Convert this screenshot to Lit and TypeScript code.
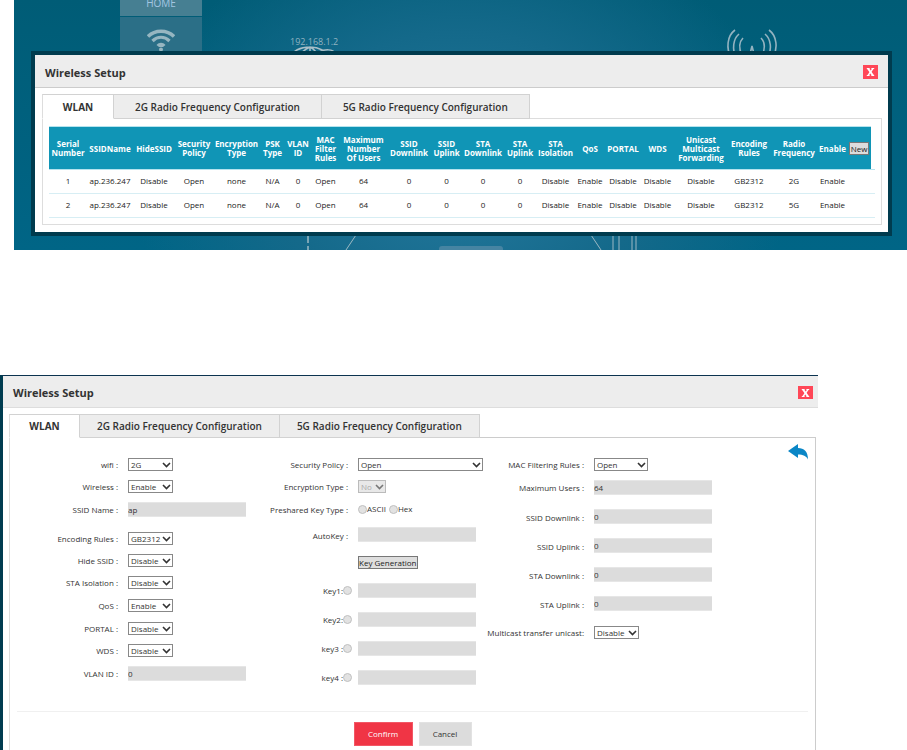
import { LitElement, html, css, svg, nothing } from "lit";
import { customElement, property } from "lit/decorators.js";
import { classMap } from "lit/directives/class-map.js";

type Column = { title: string; width: number };

const columns: Column[] = [
  { title: "Serial Number", width: 38 },
  { title: "SSIDName", width: 46 },
  { title: "HideSSID", width: 42 },
  { title: "Security Policy", width: 38 },
  { title: "Encryption Type", width: 47 },
  { title: "PSK Type", width: 25 },
  { title: "VLAN ID", width: 26 },
  { title: "MAC Filter Rules", width: 29 },
  { title: "Maximum\nNumber\nOf Users", width: 47 },
  { title: "SSID Downlink", width: 44 },
  { title: "SSID Uplink", width: 31 },
  { title: "STA Downlink", width: 42 },
  { title: "STA Uplink", width: 32 },
  { title: "STA Isolation", width: 39 },
  { title: "QoS", width: 30 },
  { title: "PORTAL", width: 36 },
  { title: "WDS", width: 33 },
  { title: "Unicast Multicast Forwarding", width: 54 },
  { title: "Encoding Rules", width: 42 },
  { title: "Radio Frequency", width: 48 },
  { title: "Enable", width: 29 },
];
const actionWidth = 24;
const spareWidth = 4;
const totalWidth = columns.reduce((sum, c) => sum + c.width, actionWidth + spareWidth);

const networks = [
  ["1", "ap.236.247", "Disable", "Open", "none", "N/A", "0", "Open", "64", "0", "0", "0", "0",
    "Disable", "Enable", "Disable", "Disable", "Disable", "GB2312", "2G", "Enable"],
  ["2", "ap.236.247", "Disable", "Open", "none", "N/A", "0", "Open", "64", "0", "0", "0", "0",
    "Disable", "Enable", "Disable", "Disable", "Disable", "GB2312", "5G", "Enable"],
];

/** Titled window frame with the three configuration tabs. */
@customElement("setup-window")
export class SetupWindow extends LitElement {
  @property({ type: Boolean, reflect: true }) compact = false;

  static styles = css`
    :host { display: block; background: #fff; color: #333; }
    .head {
      display: flex; align-items: center; justify-content: space-between;
      height: 32px; padding: 0 10px 0 10px;
      background: #ededed; border-bottom: 1px solid #ccc;
    }
    .title { margin: 0; padding-top: 3px; font-size: 11px; line-height: 16px; font-weight: 700; }
    .close {
      width: 15px; height: 14px; padding: 0; border: 0; margin-top: 2px;
      background: #ff4757; color: #fff; display: grid; place-items: center;
    }
    .close svg { display: block; }
    .body { padding: 6px 6px 7px 7px; }
    .tabs { display: flex; position: relative; margin-bottom: -1px; }
    .tab {
      height: 25px; padding: 0 21px; border: 1px solid #d2d2d2; border-left-width: 0;
      background: #ededed; color: #333;
      font: 600 10px/16px "Open Sans", "Noto Sans", sans-serif; white-space: nowrap;
    }
    .current { min-width: 72px; padding: 0; background: #fff; border-left: 1px solid #ddd; border-bottom-color: #fff; font-weight: 700; }
    .panel { border: 1px solid #ddd; }
    :host([compact]) .head { height: 31px; padding-right: 5px; border-color: #ddd; }
    :host([compact]) .title { padding-top: 2px; }
    :host([compact]) .body { padding: 6px 2px 0 6px; }
    :host([compact]) .panel { border-color: #ccc; border-left-color: #ddd; border-bottom: 0; }
    :host([compact]) .close { height: 13px; }
    :host([compact]) .tab { height: 24px; padding: 0 17px; }
    :host([compact]) .current { min-width: 71px; padding: 0; }
  `;

  render() {
    const tabs = ["WLAN", "2G Radio Frequency Configuration", "5G Radio Frequency Configuration"];
    return html`
      <header class="head">
        <h2 class="title">Wireless Setup</h2>
        <button class="close" aria-label="Close">
          <svg width="9" height="8" viewBox="0 0 9 8" stroke="#fff" fill="none" aria-hidden="true">
            <path d="M2 .5 7 7.5" stroke-width="2" />
            <path d="M7 .5 2 7.5" stroke-width="1.3" />
            <path d="M.8 .5h2.8M5.4 .5h2.8M.8 7.5h2.8M5.4 7.5h2.8" stroke-width="1" />
          </svg>
        </button>
      </header>
      <div class="body">
        <div class="tabs" role="tablist">
          ${tabs.map((t, i) => html`<button role="tab" aria-selected=${i === 0 ? "true" : "false"}
            class=${classMap({ tab: true, current: i === 0 })}>${t}</button>`)}
        </div>
        <div class="panel"><slot></slot></div>
      </div>`;
  }
}

/** List of configured networks. */
@customElement("wlan-table")
export class WlanTable extends LitElement {
  static styles = css`
    :host { display: block; padding: 7px 6px 6px; }
    .grid {
      width: 100%; table-layout: fixed; border-collapse: collapse;
      font-size: 8px; line-height: 9px; text-align: center; color: #222;
    }
    .title {
      height: 42px; padding: 0; background: #1095b6; color: #fff; font-weight: 700; white-space: pre-line;
      border-top: 1px solid #b5e3ee; border-bottom: 1px solid #b5e3ee;
    }
    .spare { border-bottom: 1px solid #b5e3ee; padding: 0; }
    .cell { height: 21px; padding: 0 0 2px; border-bottom: 1px solid #d7eef4; white-space: nowrap; }
    .new {
      width: 20px; height: 13px; padding: 0; border: 1px solid #777; background: #dcdcdc;
      color: #222; font: 8px/11px "Open Sans", "Noto Sans", sans-serif;
    }
  `;

  render() {
    const widths = [...columns.map((c) => c.width), actionWidth, spareWidth];
    return html`
      <table class="grid">
        <colgroup>
          ${widths.map((w) => html`<col style="width:${(w / totalWidth) * 100}%" />`)}
        </colgroup>
        <thead>
          <tr>
            ${columns.map((c) => html`<th class="title" scope="col">${c.title}</th>`)}
            <th class="title"><button class="new">New</button></th>
            <td class="spare"></td>
          </tr>
        </thead>
        <tbody>
          ${networks.map((row) => html`<tr>
            ${row.map((v) => html`<td class="cell">${v}</td>`)}
            <td class="cell"></td><td class="cell"></td>
          </tr>`)}
        </tbody>
      </table>`;
  }
}

type Field = {
  id: string;
  label: string;
  kind: "select" | "text" | "radios" | "button";
  value?: string;
  size?: string;
  row?: string;
  picker?: boolean;
  disabled?: boolean;
};

const general: Field[] = [
  { id: "wifi", label: "wifi :", kind: "select", value: "2G" },
  { id: "wireless", label: "Wireless :", kind: "select", value: "Enable" },
  { id: "ssid", label: "SSID Name :", kind: "text", value: "ap", row: "medium-row parted" },
  { id: "encoding", label: "Encoding Rules :", kind: "select", value: "GB2312" },
  { id: "hide", label: "Hide SSID :", kind: "select", value: "Disable" },
  { id: "isolation", label: "STA Isolation :", kind: "select", value: "Disable" },
  { id: "qos", label: "QoS :", kind: "select", value: "Enable", row: "medium-row" },
  { id: "portal", label: "PORTAL :", kind: "select", value: "Disable" },
  { id: "wds", label: "WDS :", kind: "select", value: "Disable" },
  { id: "vlan", label: "VLAN ID :", kind: "text", value: "0", row: "medium-row" },
];

const security: Field[] = [
  { id: "policy", label: "Security Policy :", kind: "select", value: "Open", size: "long" },
  { id: "encryption", label: "Encryption Type :", kind: "select", value: "No", size: "short", disabled: true },
  { id: "keytype", label: "Preshared Key Type :", kind: "radios", row: "medium-row" },
  { id: "autokey", label: "AutoKey :", kind: "text", value: "", row: "auto-row" },
  { id: "generate", label: "", kind: "button", value: "Key Generation", row: "action-row" },
  { id: "key1", label: "Key1:", kind: "text", value: "", picker: true, row: "tall-row" },
  { id: "key2", label: "Key2:", kind: "text", value: "", picker: true, row: "tall-row" },
  { id: "key3", label: "key3 :", kind: "text", value: "", picker: true, row: "tall-row" },
  { id: "key4", label: "key4 :", kind: "text", value: "", picker: true, row: "tall-row" },
];

const limits: Field[] = [
  { id: "mac", label: "MAC Filtering Rules :", kind: "select", value: "Open", size: "medium" },
  { id: "users", label: "Maximum Users :", kind: "text", value: "64", row: "medium-row spaced" },
  { id: "ssiddown", label: "SSID Downlink :", kind: "text", value: "0", row: "tall-row" },
  { id: "ssidup", label: "SSID Uplink :", kind: "text", value: "0", row: "tall-row" },
  { id: "stadown", label: "STA Downlink :", kind: "text", value: "0", row: "tall-row" },
  { id: "staup", label: "STA Uplink :", kind: "text", value: "0", row: "tall-row" },
  { id: "multicast", label: "Multicast transfer unicast:", kind: "select", value: "Disable", row: "action-row" },
];

/** Editor for one network. */
@customElement("wlan-form")
export class WlanForm extends LitElement {
  static styles = css`
    :host { display: block; position: relative; font-size: 8px; line-height: 12px; }
    * { box-sizing: border-box; }
    .columns {
      display: grid; grid-template-columns: 237px 239px 1fr;
      padding: 15px 0 19px;
    }
    .row { display: grid; grid-template-columns: 108px 1fr; column-gap: 10px; align-items: center; height: 22px; }
    .second .row { grid-template-columns: 101px 1fr; }
    .third .row { grid-template-columns: 98px 1fr; }
    .row.medium-row { height: 24px; }
    .row.auto-row { height: 27px; }
    .row.action-row { height: 28px; }
    .row.tall-row { height: 29px; }
    .parted { margin-bottom: 6px; }
    .spaced { margin-bottom: 3px; }
    .label { display: flex; justify-content: flex-end; align-items: center; white-space: nowrap; padding-top: 2px; }
    .picked { margin-right: -4px; padding-top: 0; }
    .field { display: flex; align-items: center; }
    .pick { display: flex; position: relative; }
    .box {
      width: 118px; height: 15px; padding: 0; border: 1px solid #e6e6e6; border-width: 1px 0;
      background: #dcdcdc; color: #333; border-radius: 0;
      font: 8px/13px "Open Sans", "Noto Sans", sans-serif;
    }
    .dropdown {
      appearance: none; width: 45px; height: 13px; padding: 0 0 0 2px; margin: 0;
      border: 1px solid #888; border-radius: 0; background: #fff; color: #333; opacity: 1;
      font: 8px/11px "Open Sans", "Noto Sans", sans-serif;
    }
    .medium { width: 54px; }
    .long { width: 125px; }
    .short { width: 28px; }
    .dropdown:disabled { background: #e8e8e8; color: #aaa; border-color: #bbb; }
    .arrow { position: absolute; right: 2px; top: 4px; pointer-events: none; }
    .radio {
      appearance: none; width: 9px; height: 9px; margin: 0; flex: none;
      border: 1px solid #c0c0c0; border-radius: 50%; background: #e2e2e2;
    }
    .choice { display: flex; align-items: center; margin-right: 3px; }
    .generate {
      height: 13px; padding: 0; border: 1px solid #777; background: #dedede; color: #222;
      font: 8px/11px "Open Sans", "Noto Sans", sans-serif; white-space: nowrap;
    }
    .back { position: absolute; right: 6px; top: 6px; width: 21px; height: 16px; padding: 0; border: 0; background: none; }
    .back svg { display: block; }
    .foot {
      display: flex; justify-content: center; gap: 6px; margin: 0 7px 0 7px; padding: 10px 0 6px;
      border-top: 1px solid #f0f0f0;
    }
    .btn {
      width: 53px; height: 24px; padding: 0; border: 1px solid #e2e2e2; background: #dcdcdc; color: #333;
      font: 8px/12px "Open Sans", "Noto Sans", sans-serif;
    }
    .primary { width: 59px; background: #f03545; border-color: #f25765; color: #fff; }
  `;

  private control(f: Field) {
    if (f.kind === "select")
      return html`<span class="pick">
        <select id=${f.id} class="dropdown ${f.size ?? ""}" ?disabled=${f.disabled}><option>${f.value}</option></select>
        <svg class="arrow" width="9" height="6" viewBox="0 0 9 6" fill="none" stroke=${f.disabled ? "#777" : "#333"} stroke-width="1.6" aria-hidden="true">
          <path d="M1 1 4.5 4.5 8 1" />
        </svg></span>`;
    if (f.kind === "text") return html`<input id=${f.id} class="box" type="text" .value=${f.value ?? ""} />`;
    if (f.kind === "button") return html`<button id=${f.id} type="button" class="generate">${f.value}</button>`;
    return ["ASCII", "Hex"].map((name) => html`<label class="choice">
      <input class="radio" type="radio" name="keytype" />${name}</label>`);
  }

  private label(f: Field) {
    if (!f.label) return nothing;
    return f.kind === "radios" ? html`<span>${f.label}</span>` : html`<label for=${f.id}>${f.label}</label>`;
  }

  private column(fields: Field[], name: string) {
    return html`<div class=${name}>
      ${fields.map((f) => html`<div class="row ${f.row ?? ""}">
        <span class=${classMap({ label: true, picked: !!f.picker })}>
          ${this.label(f)}
          ${f.picker ? html`<input class="radio" type="radio" name="activekey" aria-label=${f.label} />` : nothing}
        </span>
        <span class="field">${this.control(f)}</span>
      </div>`)}
    </div>`;
  }

  render() {
    return html`
      <form>
        <button type="button" class="back" aria-label="Back">
          <svg width="21" height="16" viewBox="0 0 21 16" aria-hidden="true">
            <path fill="#0a86c6" d="M0 7 10 0V4C16 4 20 7.5 20 15.5 18.5 12 15 10.5 10 10.5V14Z" />
          </svg>
        </button>
        <div class="columns">
          ${this.column(general, "first")} ${this.column(security, "second")} ${this.column(limits, "third")}
        </div>
        <div class="foot">
          <button type="button" class="btn primary">Confirm</button>
          <button type="button" class="btn">Cancel</button>
        </div>
      </form>`;
  }
}

const antenna = svg`
  <g fill="none" stroke="#93b3c0" stroke-width="1.6">
    <path d="M735 30C727 36 726 48 731 58M739 34C733 39 732 49 736 58M743 38C739 42 739 49 742 56" />
    <path d="M769 30C777 36 778 48 773 58M765 34C771 39 772 49 768 58M761 38C765 42 765 49 762 56" />
    <path d="M749 58 752 46 755 58" />
  </g>`;

@customElement("app-root")
export class AppRoot extends LitElement {
  static styles = css`
    :host { display: block; overflow: hidden; background: #fff; font-family: "Open Sans", "Noto Sans", sans-serif; }
    .scene {
      position: relative; margin-left: 14px; padding: 51px 15px 14px 17px; overflow: hidden;
      background:
        radial-gradient(ellipse 330px 260px at 50% 70%, #24789d 0%, #14698a 55%, #005f7b00 100%),
        linear-gradient(#005c76, #006586);
    }
    .backdrop { position: absolute; inset: 0; width: 100%; height: 100%; }
    .menu { position: absolute; left: 106px; top: 0; width: 82px; display: grid; gap: 1px; }
    .item { display: flex; justify-content: center; background: #2b6f87; }
    .home {
      height: 16px; background: #467f92; color: #a4c6e2; text-decoration: none;
      font-size: 10px; line-height: 7px;
    }
    .wifi { height: 40px; padding-top: 12px; box-sizing: border-box; }
    .host { position: absolute; left: 276px; top: 36px; color: #8fb2c0; font-size: 9px; line-height: 12px; }
    .upper { position: relative; box-shadow: 0 0 0 4px #003b4e; margin: 4px; }
    .lower { margin: 125px 89px 0 0; border-left: 3px solid #003c50; border-top: 1px solid #0b3350; }
  `;

  render() {
    return html`
      <section class="scene">
        <svg class="backdrop" viewBox="14 0 893 250" preserveAspectRatio="none" aria-hidden="true">
          <g fill="none" stroke="#a9bfc8" stroke-width="1.5">
            <path d="M289 58C294 49 302 47 310 47 319 47 326 51 330 58M299 58C301 52 305 49 310 47 314 49 317 52 319 58M310 47V58" />
            <path d="M319 52C325 49 333 49 335 53 336 56 334 58 332 59" />
          </g>
          ${antenna}
          <g fill="none" stroke="#9cb9c4" stroke-width="1">
            <path d="M308 234V250" stroke-width="1.5" stroke-dasharray="9 3" />
            <path d="M358 232 346 250M589 232 601 250M613 232V250M619 232V250M632 232V250M636 232V250" />
          </g>
          <rect x="439" y="246" width="64" height="10" rx="3" fill="#4684a2" />
        </svg>
        <nav class="menu">
          <a class="item home" href="#home">HOME</a>
          <a class="item wifi" href="#wireless" aria-label="Wireless">
            <svg width="28" height="23" viewBox="0 0 28 23" fill="none" stroke="#96b6c1" aria-hidden="true">
              <path d="M1 7.5C8 .5 20 .5 27 7.5" stroke-width="3.4" />
              <path d="M5.5 12C10.5 7 17.5 7 22.5 12" stroke-width="3.2" />
              <path d="M9.5 16C12 13 16 13 18.5 16L16 18H12Z" fill="#96b6c1" stroke="none" />
              <circle cx="14" cy="20.5" r="2" fill="#96b6c1" stroke="none" />
            </svg>
          </a>
        </nav>
        <span class="host">192.168.1.2</span>
        <setup-window class="upper"><wlan-table></wlan-table></setup-window>
      </section>
      <setup-window class="lower" compact><wlan-form></wlan-form></setup-window>`;
  }
}
